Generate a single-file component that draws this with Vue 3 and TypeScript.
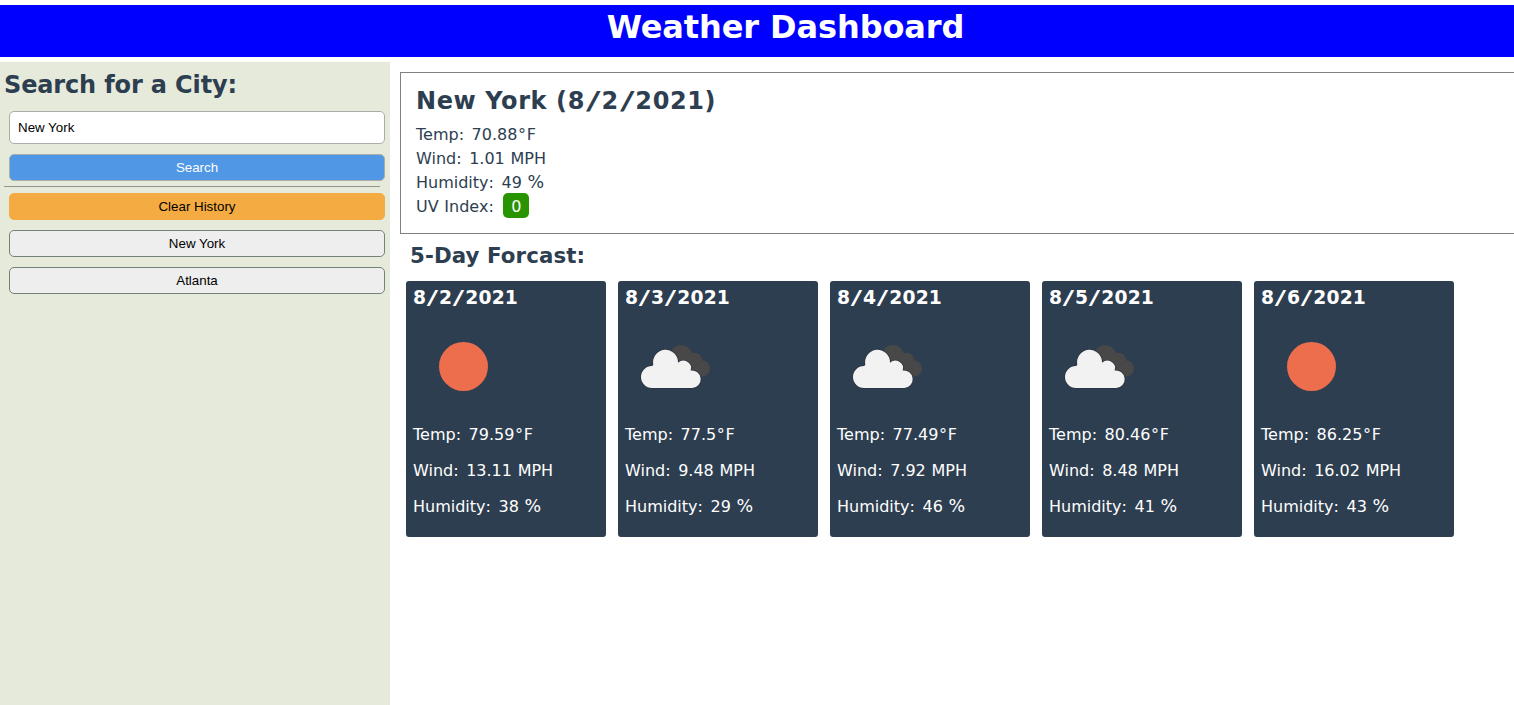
<script setup lang="ts">
import { ref } from 'vue'

interface Forecast {
  date: string[]
  icon: 'sun' | 'clouds'
  temp: string
  wind: string
  humidity: number
}

const city = ref('New York')
const history = ref<string[]>(['New York', 'Atlanta'])

const forecast: Forecast[] = [
  { date: ['8', '2', '2021'], icon: 'sun', temp: '79.59', wind: '13.11', humidity: 38 },
  { date: ['8', '3', '2021'], icon: 'clouds', temp: '77.5', wind: '9.48', humidity: 29 },
  { date: ['8', '4', '2021'], icon: 'clouds', temp: '77.49', wind: '7.92', humidity: 46 },
  { date: ['8', '5', '2021'], icon: 'clouds', temp: '80.46', wind: '8.48', humidity: 41 },
  { date: ['8', '6', '2021'], icon: 'sun', temp: '86.25', wind: '16.02', humidity: 43 },
]
</script>

<template>
  <div class="page">
    <header class="header"><h1>Weather Dashboard</h1></header>
    <div class="body">
      <aside class="sidebar">
        <h2>Search for a City:</h2>
        <input v-model="city" class="field" type="text" />
        <button class="btn search">Search</button>
        <hr />
        <button class="btn clear" @click="history = []">Clear History</button>
        <button v-for="item in history" :key="item" class="btn past" @click="city = item">{{ item }}</button>
      </aside>
      <main class="main">
        <section class="current">
          <h2>New York (8<span class="slash">/</span>2<span class="slash">/</span>2021)</h2>
          <p>Temp<span class="colon">:</span> 70.88<span class="degree">°</span>F</p>
          <p>Wind<span class="colon">:</span> 1.01 MPH</p>
          <p>Humidity<span class="colon">:</span> 49 <span class="percent">%</span></p>
          <p>UV Index<span class="colon">:</span> <span class="badge">0</span></p>
        </section>
        <h3 class="title">5-Day Forcast:</h3>
        <section class="cards">
          <article v-for="day in forecast" :key="day.date.join('/')" class="card">
            <h4>{{ day.date[0] }}<span class="slash">/</span>{{ day.date[1] }}<span class="slash">/</span>{{ day.date[2] }}</h4>
            <svg class="icon" width="100" height="100" viewBox="0 0 100 100">
              <circle v-if="day.icon === 'sun'" cx="50.5" cy="49.5" r="24.5" fill="#ec6e4c" />
              <template v-else>
                <g fill="#484848">
                  <circle cx="56" cy="39" r="11" />
                  <circle cx="69.5" cy="43.5" r="7.8" />
                  <circle cx="77" cy="51.5" r="8" />
                  <path d="M55 39h16l7 20.5H60z" />
                </g>
                <path
                  d="M27 71A11 11 0 0 1 27 49L28.3 48A12.5 12.5 0 1 1 53 45.8A7.6 7.6 0 0 1 65.6 53.5A8.8 8.8 0 1 1 67.2 71z"
                  fill="#f2f2f2"
                  stroke="#2d3540"
                  stroke-width="1.4"
                  paint-order="stroke"
                />
              </template>
            </svg>
            <p>Temp<span class="colon">:</span> {{ day.temp }}<span class="degree">°</span>F</p>
            <p>Wind<span class="colon">:</span> {{ day.wind }} MPH</p>
            <p>Humidity<span class="colon">:</span> {{ day.humidity }} <span class="percent">%</span></p>
          </article>
        </section>
      </main>
    </div>
  </div>
</template>

<style>
body {
  background: #fff;
  overflow: hidden;
}
</style>

<style scoped>
.page {
  height: 705px;
  display: flex;
  flex-direction: column;
  padding-top: 5px;
  box-sizing: border-box;
  overflow: hidden;
  font-family: Verdana, 'DejaVu Sans', sans-serif;
  font-size: 16px;
  line-height: 24px;
  color: #2d3e50;
}
h1, h2, h3, h4, p {
  margin: 0;
  white-space: nowrap;
}
p {
  word-spacing: 0.6px;
}
.slash {
  display: inline-block;
  width: 0.689em;
  font-weight: 400;
  letter-spacing: 0;
  text-align: center;
  transform: scaleX(1.8);
}
.colon {
  display: inline-block;
  width: 0.454em;
}
.degree {
  display: inline-block;
  width: 0.58em;
  text-align: center;
}
.percent {
  font-size: 17.5px;
  line-height: 1;
}
.header {
  height: 52px;
  flex: none;
  box-sizing: border-box;
  background: #00f;
  color: #fff;
  padding: 1px 0 0 57px;
}
h1 {
  font-size: 32px;
  line-height: 42px;
  letter-spacing: -0.1px;
  text-align: center;
}
.body {
  flex: 1;
  display: flex;
  margin-top: 5px;
}
.sidebar {
  width: 390px;
  flex: none;
  box-sizing: border-box;
  background: #e6eadb;
  padding: 5px 5px 0 4px;
  display: flex;
  flex-direction: column;
}
.sidebar h2 {
  font-size: 24px;
  line-height: 36px;
  letter-spacing: -0.14px;
  margin-bottom: 8px;
}
.field, .btn {
  box-sizing: border-box;
  margin: 0 0 10px 5px;
  border: 1px solid #a9afa8;
  border-radius: 5px;
  font: 13.333px/15px 'Liberation Sans', Arial, sans-serif;
  color: #000;
}
.field {
  height: 33px;
  padding: 0 8px;
  background: #fff;
  outline: none;
}
.btn {
  height: 27px;
  padding: 0;
}
.search {
  background: #5097e5;
  color: #fff;
  margin-bottom: 5px;
}
hr {
  width: 376px;
  height: 1px;
  margin: 0 0 6px;
  border: 0;
  background: #8c9794;
}
.clear {
  background: #f4ab42;
  border-color: #f4ab42;
}
.past {
  background: #eee;
  border-color: #75827a;
}
.main {
  flex: 1;
  min-width: 0;
  padding: 10px 0 0 10px;
}
.current {
  height: 162px;
  box-sizing: border-box;
  border: 1px solid #808186;
  border-right: 0;
  padding: 10px 15px 0;
}
.current h2 {
  font-size: 24px;
  line-height: 36px;
  letter-spacing: 0.6px;
  margin-bottom: 4px;
}
.badge {
  display: inline-block;
  box-sizing: border-box;
  height: 25px;
  line-height: 25px;
  width: 26px;
  margin: -2px 0 0 2px;
  padding-top: 1px;
  text-align: center;
  vertical-align: top;
  border-radius: 5px;
  background: #289400;
  color: #fff;
}
.title {
  font-size: 21.33px;
  line-height: 30px;
  letter-spacing: 0.1px;
  margin: 7px 0 10px 10px;
}
.cards {
  display: flex;
  gap: 12px;
  padding-left: 6px;
}
.card {
  width: 200px;
  height: 256px;
  box-sizing: border-box;
  padding: 5px 7px;
  border-radius: 3px;
  background: #2d3e50;
  color: #fff;
}
.card h4 {
  font-size: 18.72px;
  line-height: 24px;
  letter-spacing: 0.2px;
}
.icon {
  display: block;
  margin: 7px 0 0;
}
.card p {
  line-height: 24px;
  margin-bottom: 12px;
}
.icon + p {
  margin-top: 6px;
}
</style>
